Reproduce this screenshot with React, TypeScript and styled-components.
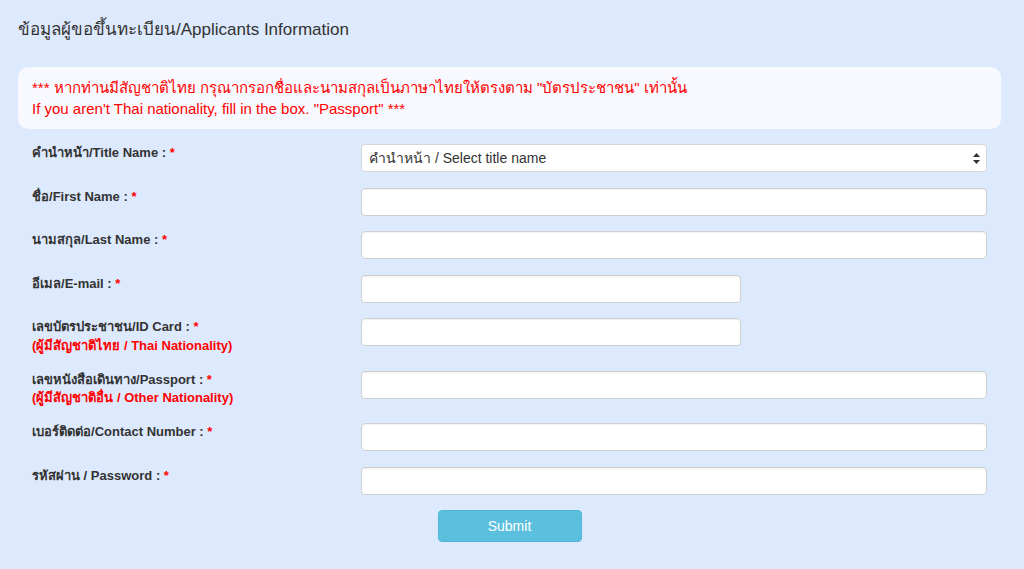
import React from "react";
import styled, { createGlobalStyle } from "styled-components";

const Global = createGlobalStyle`
  html, body { margin: 0; padding: 0; background: #dde9fd; }
  body { font-family: "Liberation Sans", Arial, "Noto Sans", sans-serif; color: #333; }
  * { box-sizing: border-box; }
`;

const Page = styled.div`
  width: 1024px;
  height: 569px;
  background: #dde9fd;
  padding: 19px 23px 0 18px;
  overflow: hidden;
`;

const Heading = styled.h3`
  margin: 0 0 26px 0;
  font-size: 17px;
  font-weight: normal;
  line-height: 22px;
  color: #333;
`;

const Notice = styled.div`
  background: #f7f9fe;
  border-radius: 10px;
  padding: 10px 14px 10px 14px;
  color: #ff0000;
  font-size: 15px;
  line-height: 21px;
  margin-bottom: 15px;
`;

const Form = styled.form`
  display: flex;
  flex-direction: column;
  gap: 15.5px;
  padding: 0 14px;
`;

const Row = styled.div`
  display: grid;
  grid-template-columns: 329px 1fr;
  align-items: start;
`;

const Label = styled.label`
  font-size: 13px;
  font-weight: bold;
  line-height: 18.5px;
  color: #333;
`;

const Req = styled.span`
  color: #ff0000;
`;

const Note = styled.span`
  display: block;
  color: #ff0000;
`;

const Input = styled.input<{ $short?: boolean }>`
  display: block;
  width: ${(p) => (p.$short ? "380px" : "100%")};
  height: 28px;
  border: 1px solid #cfcfcf;
  border-radius: 4px;
  background: #fff;
  box-shadow: inset 0 1px 1px rgba(0, 0, 0, 0.06);
  font-size: 14px;
  padding: 4px 8px;
`;

const SelectWrap = styled.div`
  position: relative;
`;

const Select = styled.select`
  display: block;
  width: 100%;
  height: 28px;
  appearance: none;
  -webkit-appearance: none;
  border: 1px solid #d6d6d6;
  border-radius: 4px;
  background: #fff;
  font-family: "Liberation Sans", Arial, sans-serif;
  font-size: 14px;
  color: #333;
  padding: 0 7px;
`;

const Arrows = styled.svg`
  position: absolute;
  right: 7px;
  top: 9px;
  pointer-events: none;
`;

const Actions = styled.div`
  display: flex;
  justify-content: center;
`;

const Submit = styled.button`
  width: 144px;
  height: 32px;
  background: #5bc0de;
  border: 1px solid #4fb8d8;
  border-radius: 4px;
  color: #fff;
  font-family: "Liberation Sans", Arial, sans-serif;
  font-size: 14px;
`;

type Field = {
  th: string;
  en: string;
  note?: string;
  short?: boolean;
  sep?: string;
};

const fields: Field[] = [
  { th: "ชื่อ", en: "First Name" },
  { th: "นามสกุล", en: "Last Name" },
  { th: "อีเมล", en: "E-mail", short: true },
  { th: "เลขบัตรประชาชน", en: "ID Card", note: "(ผู้มีสัญชาติไทย / Thai Nationality)", short: true },
  { th: "เลขหนังสือเดินทาง", en: "Passport", note: "(ผู้มีสัญชาติอื่น / Other Nationality)" },
  { th: "เบอร์ติดต่อ", en: "Contact Number" },
  { th: "รหัสผ่าน", en: "Password", sep: " / " },
];

export default function App() {
  return (
    <Page>
      <Global />
      <Heading>ข้อมูลผู้ขอขึ้นทะเบียน/Applicants Information</Heading>
      <Notice>
        *** หากท่านมีสัญชาติไทย กรุณากรอกชื่อและนามสกุลเป็นภาษาไทยให้ตรงตาม "บัตรประชาชน" เท่านั้น
        <br />
        If you aren't Thai nationality, fill in the box. "Passport" ***
      </Notice>
      <Form onSubmit={(e) => e.preventDefault()}>
        <Row>
          <Label>
            คำนำหน้า/Title Name : <Req>*</Req>
          </Label>
          <SelectWrap>
            <Select defaultValue="">
              <option value="">คำนำหน้า / Select title name</option>
              <option value="mr">นาย / Mr.</option>
              <option value="mrs">นาง / Mrs.</option>
              <option value="ms">นางสาว / Ms.</option>
            </Select>
            <Arrows width="7" height="11" viewBox="0 0 7 11">
              <path d="M3.5 0 L7 4 L0 4 Z" fill="#333" />
              <path d="M3.5 11 L7 7 L0 7 Z" fill="#333" />
            </Arrows>
          </SelectWrap>
        </Row>
        {fields.map((f) => (
          <Row key={f.en}>
            <Label>
              {f.th}
              {f.sep ?? "/"}
              {f.en} : <Req>*</Req>
              {f.note && <Note>{f.note}</Note>}
            </Label>
            <Input $short={f.short} type={f.en === "Password" ? "password" : "text"} />
          </Row>
        ))}
        <Actions>
          <Submit type="submit">Submit</Submit>
        </Actions>
      </Form>
    </Page>
  );
}
